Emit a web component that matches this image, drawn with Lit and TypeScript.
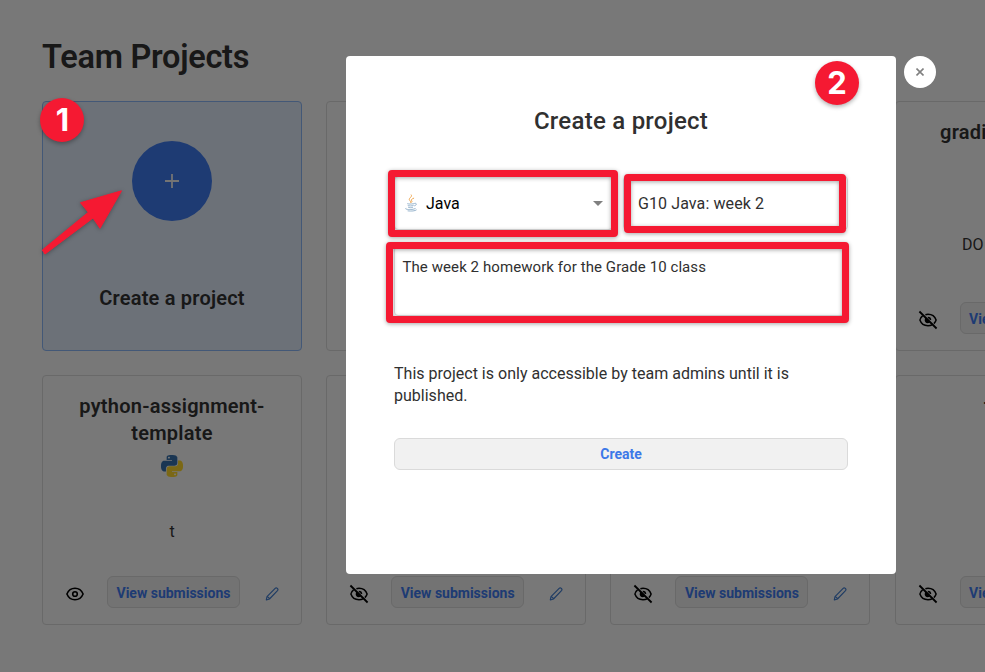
import { LitElement, html, css, svg, nothing } from "lit";
import { customElement, property } from "lit/decorators.js";

const pythonHalf =
  "M14.25.18l.9.2.73.26.59.3.45.32.34.34.25.34.16.33.1.3.04.26.02.2-.01.13V8.5l-.05.63-.13.55-.21.46-.26.38-.3.31-.33.25-.35.19-.35.14-.33.1-.3.07-.26.04-.21.02H8.77l-.69.05-.59.14-.5.22-.41.27-.33.32-.27.35-.2.36-.15.37-.1.35-.07.32-.04.27-.02.21v3.06H3.17l-.21-.03-.28-.07-.32-.12-.35-.18-.36-.26-.36-.36-.35-.46-.32-.59-.28-.73-.21-.88-.14-1.05-.05-1.23.06-1.22.16-1.04.24-.87.32-.71.36-.57.4-.44.42-.33.42-.24.4-.16.36-.1.32-.05.24-.01h.16l.06.01h8.16v-.83H6.18l-.01-2.75-.02-.37.05-.34.11-.31.17-.28.25-.26.31-.23.38-.2.44-.18.51-.15.58-.12.64-.1.71-.06.77-.04.84-.02 1.27.05zm-6.3 1.98l-.23.33-.08.41.08.41.23.34.33.22.41.09.41-.09.33-.22.23-.34.08-.41-.08-.41-.23-.33-.33-.22-.41-.09-.41.09z";

const pythonIcon = html`<svg width="22" height="22" viewBox="0 0 24 24">
  <path d=${pythonHalf} fill="#346da6" />
  <path d=${pythonHalf} fill="#f6d02a" transform="rotate(180 12 12)" />
</svg>`;

const eye = svg`<path d="M1.900 8C3.500 4.100 6.200 2.300 10 2.300s6.500 1.800 8.100 5.700c-1.600 3.900-4.300 5.700-8.100 5.700S3.500 11.900 1.900 8z" />`;

const eyeIcon = html`<svg width="20" height="20" viewBox="0 -2 20 20" fill="none" stroke="#000" stroke-width="1.600" stroke-linejoin="round">
  ${eye}<circle cx="10" cy="8" r="2.300" />
</svg>`;

const eyeOffIcon = html`<svg width="20" height="20" viewBox="0 -2 20 20" fill="none" stroke="#000" stroke-width="1.500">
  <path d="M4.600 3.900C3.200 4.900 2.200 6.200 1.900 8c1.300 3.800 4.200 5.700 8.100 5.700 1.500 0 2.900-.3 4.100-.9M7.400 2.700C8.200 2.400 9 2.300 10 2.300c3.900 0 6.800 1.900 8.100 5.700-.4 1.300-1.200 2.600-2.200 3.600" />
  <path d="M7.600 6.900c-.7 2.200.8 4 3 3.400L7.600 6.900z" fill="#000" />
  <path d="M9.800 5.400c1.600 0 2.700 1.100 2.700 2.700" />
  <path d="M1.400-.5 18.600 16.500" stroke-width="1.800" />
</svg>`;

const pencilIcon = html`<svg width="14" height="14" viewBox="0 0 16 16" fill="none" stroke="#3c76c6" stroke-width="1.300" stroke-linejoin="round">
  <path d="M1.500 14.800l.8-3.700 9.300-9.600c1.600-1.500 4.200.9 2.700 2.600L5.100 13.700 1.500 14.800zM2.300 11.100c1.300.2 2.500 1.300 2.800 2.600" />
</svg>`;

const javaIcon = html`<svg class="java" width="14" height="18" viewBox="0 0 14 18" fill="none" stroke-linecap="round">
  <path d="M7.300.9c1.600 2-3.100 3.200-1.800 5.200.4.700 1.300 1.200 1.200 2.300M9.700 4.200C7.500 5 6.900 5.800 7.700 6.800c.5.600.2 1.200-.4 1.700" stroke="#f0a64e" stroke-width="1" />
  <path d="M3.400 9.500c-1 .7 5 .8 6.800.1M3.900 11.500c.6.700 4.200.6 5.400 0M4.400 13.300c.8.600 3.100.6 4.300 0M11 9.300c2.200-.4 1.700 2-.4 2.500M1.800 14.400c-2.300.9 5.800 2.100 9.400.2M4 16.900c3.500.4 7 .1 8.300-.9" stroke="#7fa2c0" stroke-width=".8" />
</svg>`;

@customElement("project-card")
class ProjectCard extends LitElement {
  @property() heading = "";
  @property() note = "";
  @property({ type: Boolean }) published = false;
  @property({ type: Boolean }) python = false;

  static styles = css`
    :host {
      display: flex;
      flex-direction: column;
      box-sizing: border-box;
      height: 250px;
      border: 1px solid #d2d2d2;
      border-radius: 4px;
      padding: 17px 16px 16px;
      text-align: center;
    }
    .heading {
      font-size: 20px;
      line-height: 27px;
      font-weight: 600;
      letter-spacing: 0.23px;
    }
    .logo { height: 22px; margin-top: 8px; }
    .logo svg { display: block; margin: 0 auto; }
    .spacer { flex: 1; }
    .note { font-size: 16px; line-height: 22px; height: 22px; margin-bottom: var(--note-gap, 33px); }
    .actions {
      display: flex;
      align-items: center;
      padding: 0 6px;
    }
    .actions svg { display: block; position: relative; top: 2px; }
    .view {
      box-sizing: border-box;
      width: 133px;
      height: 32px;
      line-height: 32px;
      border: 1px solid #d2d2d2;
      border-radius: 6px;
      background: #e6e6e6;
      color: #3c76e6;
      font-size: 14px;
      font-weight: 700;
      margin: 0 25px 0 22px;
      white-space: nowrap;
    }
  `;

  render() {
    return html`
      <div class="heading">${this.heading}</div>
      ${this.python ? html`<div class="logo">${pythonIcon}</div>` : nothing}
      <div class="spacer"></div>
      <div class="note">${this.note}</div>
      <div class="actions">
        ${this.published ? eyeIcon : eyeOffIcon}
        <div class="view">View submissions</div>
        ${pencilIcon}
      </div>
    `;
  }
}

@customElement("app-root")
class AppRoot extends LitElement {
  static styles = css`
    :host {
      display: block;
      position: relative;
      width: 985px;
      height: 672px;
      overflow: hidden;
      background: #f0f0f0;
      color: #303030;
      font-family: Roboto, "Liberation Sans", sans-serif;
    }
    .page { padding: 36px 0 0 42px; }
    h1 {
      margin: 0 0 23px;
      font-size: 32.500px;
      line-height: 42px;
      font-weight: 600;
      letter-spacing: -0.260px;
    }
    .grid {
      display: grid;
      grid-template-columns: repeat(4, 260px);
      gap: 24px 24.200px;
    }
    .two-line { --note-gap: 46px; }
    .new {
      box-sizing: border-box;
      height: 250px;
      border: 1px solid #86b0ee;
      border-radius: 4px;
      background: #d9e3f0;
      padding-top: 39px;
      display: flex;
      flex-direction: column;
      align-items: center;
    }
    .plus {
      width: 80px;
      height: 80px;
      border-radius: 50%;
      background: #3c76e6;
      display: grid;
      place-items: center;
    }
    .new-label { margin-top: 64px; font-size: 20px; line-height: 27px; font-weight: 600; letter-spacing: 0.2px; }
    .shade { position: absolute; inset: 0; background: rgba(0, 0, 0, 0.5); }
    .modal {
      position: absolute;
      left: 346px;
      top: 56px;
      width: 550px;
      height: 518px;
      box-sizing: border-box;
      padding: 48px 48px 0;
      border-radius: 4px;
      background: #fff;
    }
    h2 { margin: 0; text-align: center; font-size: 24px; line-height: 34px; font-weight: 500; letter-spacing: 0.25px; }
    .row { display: flex; gap: 10px; margin-top: 38px; }
    .select, .name, .about { box-sizing: border-box; border: 1px solid #ddd; border-radius: 4px; }
    .select { width: 219px; height: 54px; display: flex; align-items: center; padding: 0 9px; color: #000; font-size: 16px; }
    .java { margin-right: 8px; }
    .caret { margin-left: auto; border: 5px solid transparent; border-top-color: #808080; border-bottom: 0; }
    .name { flex: 1; height: 54px; line-height: 53px; padding-left: 14px; font-size: 16px; letter-spacing: 0.1px; }
    .about { height: 70px; margin-top: 16px; padding: 9px 7.500px; font-size: 15px; line-height: 22px; letter-spacing: 0.080px; }
    p { margin: 47px 0 31px; font-size: 16px; line-height: 22px; letter-spacing: 0.010px; }
    .create {
      height: 32px;
      box-sizing: border-box;
      border: 1px solid #dadada;
      border-radius: 6px;
      background: #f1f1f1;
      color: #3c78e8;
      text-align: center;
      font-size: 14px;
      line-height: 30px;
      font-weight: 700;
    }
    .close {
      position: absolute;
      left: 904px;
      top: 56px;
      width: 32px;
      height: 32px;
      border-radius: 50%;
      background: #fff;
      display: grid;
      place-items: center;
    }
    .frame {
      position: absolute;
      box-sizing: border-box;
      border: 7px solid #f51932;
      border-radius: 4px;
      filter: drop-shadow(0 1px 2px rgba(0, 0, 0, 0.35));
    }
    .frame-language { left: 388px; top: 170px; width: 229.500px; height: 67px; }
    .frame-name { left: 624px; top: 174px; width: 222px; height: 59px; }
    .frame-about { left: 386px; top: 242px; width: 463px; height: 81px; }
    .badge {
      position: absolute;
      width: 44px;
      height: 44px;
      border-radius: 50%;
      background: #f51932;
      color: #fff;
      box-shadow: 0 2px 4px rgba(0, 0, 0, 0.3);
      font: 700 31px/44px Inter, sans-serif;
      text-align: center;
    }
    .badge-one { left: 40.400px; top: 98.400px; }
    .badge-two { left: 815px; top: 61.200px; }
    .arrow { position: absolute; left: 36px; top: 184px; filter: drop-shadow(0 1px 2px rgba(0, 0, 0, 0.3)); }
  `;

  render() {
    return html`
      <div class="page">
        <h1>Team Projects</h1>
        <div class="grid">
          <div class="new">
            <div class="plus">
              <svg width="16" height="16" viewBox="0 0 16 16" stroke="#e8e8e8" stroke-width="1.800">
                <path d="M8 1v14M1 8h14" />
              </svg>
            </div>
            <div class="new-label">Create a project</div>
          </div>
          <project-card></project-card>
          <project-card></project-card>
          <project-card class="two-line" heading="grading-templates" note="DO NOT PUBLISH"></project-card>
          <project-card heading="python-assignment-template" note="t" published python></project-card>
          <project-card></project-card>
          <project-card></project-card>
          <project-card heading="template"></project-card>
        </div>
      </div>
      <div class="shade"></div>
      <div class="modal">
        <h2>Create a project</h2>
        <div class="row">
          <div class="select">${javaIcon}<span>Java</span><i class="caret"></i></div>
          <div class="name">G10 Java: week 2</div>
        </div>
        <div class="about">The week 2 homework for the Grade 10 class</div>
        <p>This project is only accessible by team admins until it is published.</p>
        <div class="create">Create</div>
      </div>
      <div class="close">
        <svg width="8" height="8" viewBox="0 0 8 8" stroke="#808080" stroke-width="1.600">
          <path d="M.5.5l7 7M7.500.5l-7 7" />
        </svg>
      </div>
      <div class="frame frame-language"></div>
      <div class="frame frame-name"></div>
      <div class="frame frame-about"></div>
      <div class="badge badge-one">1</div>
      <div class="badge badge-two">2</div>
      <svg class="arrow" width="92" height="76" viewBox="36 184 92 76">
        <path d="M121.500 190.800L100 228.300 93 218 45 254 42.300 250 88.300 212.300 80.500 202.700z" fill="#f51932" stroke="#f51932" stroke-width="1" stroke-linejoin="round" />
      </svg>
    `;
  }
}
